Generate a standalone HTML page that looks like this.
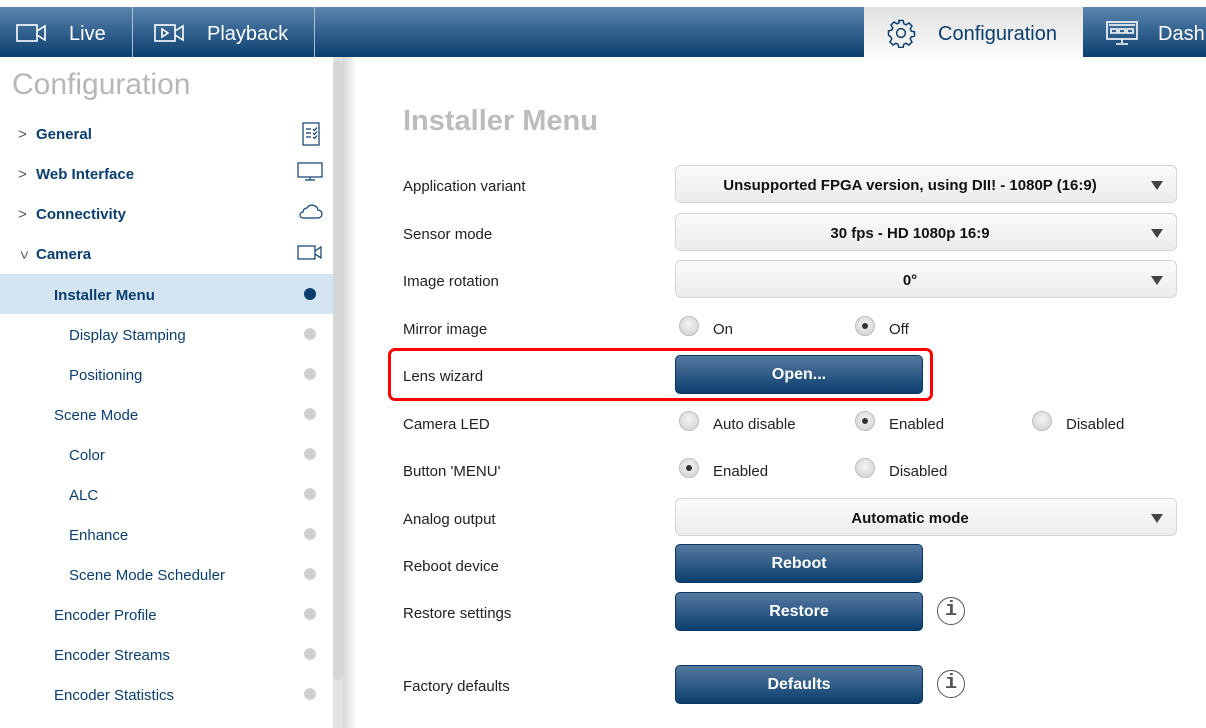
<!DOCTYPE html>
<html><head><style>
*{margin:0;padding:0;box-sizing:border-box}
body{width:1206px;height:728px;overflow:hidden;background:#fff;font-family:"Liberation Sans",sans-serif;position:relative}
.nav{position:absolute;top:7px;left:0;width:1206px;height:50px;background:linear-gradient(#5a85ae,#0b3e6e)}
.tab{position:absolute;top:2px;height:50px;color:#fff;font-size:20px;line-height:50px}
.sep{position:absolute;top:0;width:1px;height:50px;background:#a9c0d6}
.cfg{position:absolute;left:864px;top:7px;width:219px;height:50px;background:linear-gradient(#e2e2e2,#fafafa);color:#0b3e6e;font-size:20px;line-height:54px}
.sb{position:absolute;left:333px;top:57px;width:10px;height:671px;background:#e3e3e3}
.sbt{position:absolute;left:333px;top:60px;width:10px;height:620px;background:#d6d6d6;border-radius:5px}
.shadow{position:absolute;left:343px;top:57px;width:14px;height:671px;background:linear-gradient(90deg,#d8d8d8,#fff)}
.st{position:absolute;left:12px;top:68px;font-size:30px;color:#b7b7b7}
.it{position:absolute;left:0;width:343px;height:40px;line-height:44px;font-size:15px;color:#0b3e6e}
.dot{position:absolute;left:304px;top:14px;width:12px;height:12px;border-radius:50%;background:#d0d0d0}
.chev{position:absolute;left:18px;top:0;color:#555;font-size:15px}
.ic{position:absolute;left:297px;top:8px}
h1{position:absolute;left:403px;top:105px;font-size:29px;color:#bcbcbc;font-weight:bold}
.lb{position:absolute;left:403px;font-size:15px;color:#222;margin-top:2px}
.dd{position:absolute;left:675px;width:502px;height:38px;border:1px solid #d6d6d6;border-radius:6px;background:linear-gradient(#fbfbfb,#ececec);text-align:center;line-height:40px;font-size:15px;font-weight:bold;color:#111;padding-right:32px}
.dd:after{content:"";position:absolute;right:13px;top:15px;border-left:6px solid transparent;border-right:6px solid transparent;border-top:9px solid #444}
.bt{position:absolute;left:675px;width:248px;height:39px;border-radius:5px;background:linear-gradient(#55799f,#0b3e6e);border:1px solid #0a3560;color:#fff;font-weight:bold;font-size:16px;text-align:center;line-height:38px}
.rd{position:absolute;width:20px;height:20px;border-radius:50%;background:radial-gradient(circle at 50% 40%,#f3f3f3,#cfcfcf);border:1px solid #bdbdbd}
.rd.on:after{content:"";position:absolute;left:6px;top:6px;width:6px;height:6px;border-radius:50%;background:#333}
.rl{position:absolute;font-size:15px;color:#222;margin-top:2px}
.info{position:absolute;left:937px;width:28px;height:28px;border:1.5px solid #555;border-radius:50%;text-align:center;font:bold 20px/26px "Liberation Mono",monospace;color:#555}
</style></head><body>
<div class="nav">
<svg style="position:absolute;left:16px;top:16px" width="32" height="20" viewBox="0 0 32 20" fill="none" stroke="#fff" stroke-width="1.6"><rect x="1" y="2" width="20" height="16"/><path d="M21 8 L29 3 V17 L21 12"/></svg>
<div class="tab" style="left:69px">Live</div>
<div class="sep" style="left:132px"></div>
<svg style="position:absolute;left:154px;top:16px" width="32" height="20" viewBox="0 0 32 20" fill="none" stroke="#fff" stroke-width="1.6"><rect x="1" y="2" width="20" height="16"/><path d="M21 8 L29 3 V17 L21 12"/><path d="M8 6 L14 10 L8 14Z"/></svg>
<div class="tab" style="left:207px">Playback</div>
<div class="sep" style="left:314px"></div>
<svg style="position:absolute;left:1106px;top:14px" width="32" height="24" viewBox="0 0 32 24" fill="none" stroke="#fff" stroke-width="1.6"><rect x="1" y="1" width="30" height="17"/><path d="M3 4h26M5 8h6v4H5zM13 8h6v4h-6zM21 8h6v4h-6zM16 18v4M10 23h12"/></svg>
<div class="tab" style="left:1158px">Dash</div>
</div>
<div class="cfg">
<svg style="position:absolute;left:22px;top:11px" width="30" height="30" viewBox="0 0 24 24" fill="none" stroke="#0b3e6e" stroke-width="1.2"><circle cx="12" cy="12" r="3.5"/><path d="M10.3 2h3.4l.6 2.6 1.8.8 2.3-1.4 2.4 2.4-1.4 2.3.8 1.8 2.6.6v3.4l-2.6.6-.8 1.8 1.4 2.3-2.4 2.4-2.3-1.4-1.8.8-.6 2.6h-3.4l-.6-2.6-1.8-.8-2.3 1.4-2.4-2.4 1.4-2.3-.8-1.8L2 13.7v-3.4l2.6-.6.8-1.8L4 5.6 6.4 3.2l2.3 1.4 1.8-.8z"/></svg>
<span style="position:absolute;left:74px">Configuration</span></div>

<div class="st">Configuration</div>
<div class="it" style="top:113px"><span class="chev">&gt;</span><b style="position:absolute;left:36px">General</b><svg class="ic" style="left:302px;top:9px" width="18" height="24" viewBox="0 0 18 24" fill="none" stroke="#0b3e6e" stroke-width="1.2"><rect x="1" y="1" width="16" height="22"/><path d="M4 7h5M4 11h5M4 15h5M11 7l1.5 1.5 2.5-3M11 11l1.5 1.5 2.5-3M11 15l1.5 1.5 2.5-3"/></svg></div>
<div class="it" style="top:153px"><span class="chev">&gt;</span><b style="position:absolute;left:36px">Web Interface</b><svg class="ic" width="26" height="22" viewBox="0 0 26 22" fill="none" stroke="#0b3e6e" stroke-width="1.2"><rect x="1" y="2" width="24" height="14"/><path d="M13 16v3M8 19h10"/></svg></div>
<div class="it" style="top:193px"><span class="chev">&gt;</span><b style="position:absolute;left:36px">Connectivity</b><svg class="ic" width="26" height="22" viewBox="0 0 26 22" fill="none" stroke="#0b3e6e" stroke-width="1.2"><path d="M6 17h15a4 4 0 0 0 0-8 6 6 0 0 0-11-2 4 4 0 0 0-4 4 3 3 0 0 0 0 6z"/></svg></div>
<div class="it" style="top:233px"><span class="chev" style="transform:rotate(90deg);left:19px">&gt;</span><b style="position:absolute;left:36px">Camera</b><svg class="ic" width="26" height="22" viewBox="0 0 26 22" fill="none" stroke="#0b3e6e" stroke-width="1.2"><rect x="1" y="5" width="17" height="13"/><path d="M18 10l6-4v11l-6-4"/></svg></div>
<div class="it" style="top:274px;background:#d4e4f1"><b style="position:absolute;left:54px">Installer Menu</b><div class="dot" style="background:#0b3e6e"></div></div>
<div class="it" style="top:314px"><span style="position:absolute;left:69px">Display Stamping</span><div class="dot"></div></div>
<div class="it" style="top:354px"><span style="position:absolute;left:69px">Positioning</span><div class="dot"></div></div>
<div class="it" style="top:394px"><span style="position:absolute;left:54px">Scene Mode</span><div class="dot"></div></div>
<div class="it" style="top:434px"><span style="position:absolute;left:69px">Color</span><div class="dot"></div></div>
<div class="it" style="top:474px"><span style="position:absolute;left:69px">ALC</span><div class="dot"></div></div>
<div class="it" style="top:514px"><span style="position:absolute;left:69px">Enhance</span><div class="dot"></div></div>
<div class="it" style="top:554px"><span style="position:absolute;left:69px">Scene Mode Scheduler</span><div class="dot"></div></div>
<div class="it" style="top:594px"><span style="position:absolute;left:54px">Encoder Profile</span><div class="dot"></div></div>
<div class="it" style="top:634px"><span style="position:absolute;left:54px">Encoder Streams</span><div class="dot"></div></div>
<div class="it" style="top:674px"><span style="position:absolute;left:54px">Encoder Statistics</span><div class="dot"></div></div>
<div class="sb"></div><div class="sbt"></div><div class="shadow"></div>

<h1>Installer Menu</h1>
<div class="lb" style="top:176px">Application variant</div>
<div class="dd" style="top:165px">Unsupported FPGA version, using DII! - 1080P (16:9)</div>
<div class="lb" style="top:224px">Sensor mode</div>
<div class="dd" style="top:213px">30 fps - HD 1080p 16:9</div>
<div class="lb" style="top:271px">Image rotation</div>
<div class="dd" style="top:260px">0°</div>
<div class="lb" style="top:319px">Mirror image</div>
<div class="rd" style="left:679px;top:316px"></div><div class="rl" style="left:713px;top:319px">On</div>
<div class="rd on" style="left:855px;top:316px"></div><div class="rl" style="left:889px;top:319px">Off</div>
<div class="lb" style="top:366px">Lens wizard</div>
<div class="bt" style="top:355px">Open...</div>
<div style="position:absolute;left:388px;top:348px;width:545px;height:53px;border:3px solid #f00;border-radius:7px"></div>
<div class="lb" style="top:414px">Camera LED</div>
<div class="rd" style="left:679px;top:411px"></div><div class="rl" style="left:713px;top:414px">Auto disable</div>
<div class="rd on" style="left:855px;top:411px"></div><div class="rl" style="left:889px;top:414px">Enabled</div>
<div class="rd" style="left:1032px;top:411px"></div><div class="rl" style="left:1066px;top:414px">Disabled</div>
<div class="lb" style="top:461px">Button 'MENU'</div>
<div class="rd on" style="left:679px;top:458px"></div><div class="rl" style="left:713px;top:461px">Enabled</div>
<div class="rd" style="left:855px;top:458px"></div><div class="rl" style="left:889px;top:461px">Disabled</div>
<div class="lb" style="top:509px">Analog output</div>
<div class="dd" style="top:498px">Automatic mode</div>
<div class="lb" style="top:556px">Reboot device</div>
<div class="bt" style="top:544px">Reboot</div>
<div class="lb" style="top:603px">Restore settings</div>
<div class="bt" style="top:592px">Restore</div>
<div class="info" style="top:597px">i</div>
<div class="lb" style="top:676px">Factory defaults</div>
<div class="bt" style="top:665px">Defaults</div>
<div class="info" style="top:670px">i</div>
</body></html>
